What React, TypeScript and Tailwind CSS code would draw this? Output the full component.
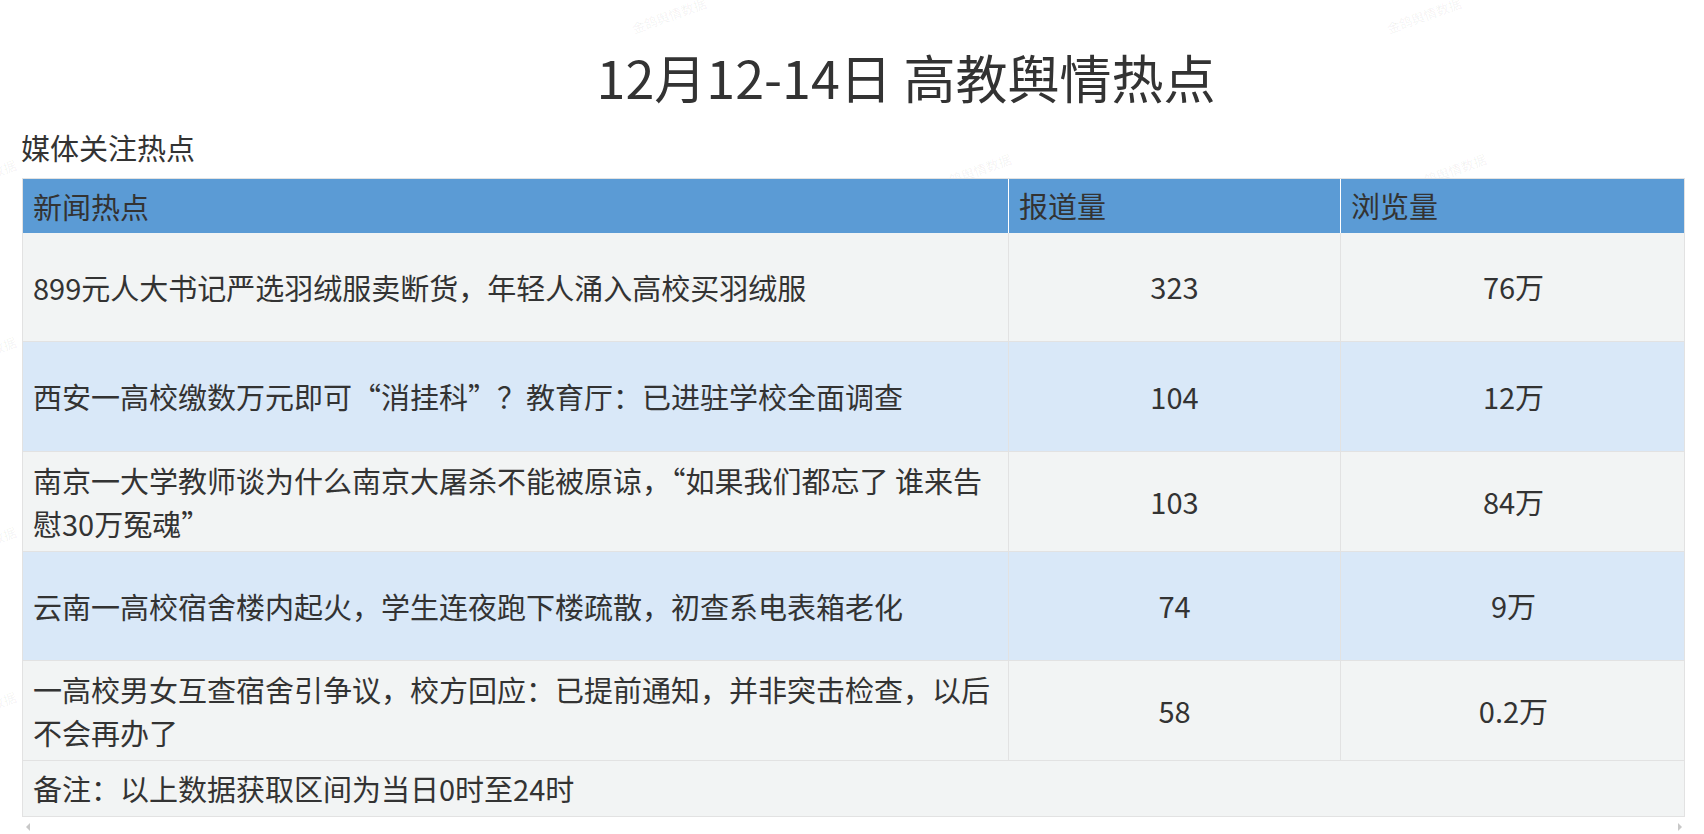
import React from "react";

const rows = [
  { title: "899元人大书记严选羽绒服卖断货，年轻人涌入高校买羽绒服", a: "323", b: "76万", bg: "bg-[#f2f4f4]", h: "h-[109px]" },
  { title: "西安一高校缴数万元即可“消挂科”？教育厅：已进驻学校全面调查", a: "104", b: "12万", bg: "bg-[#d9e8f8]", h: "h-[110px]" },
  { title: "南京一大学教师谈为什么南京大屠杀不能被原谅，“如果我们都忘了 谁来告慰30万冤魂”", a: "103", b: "84万", bg: "bg-[#f2f4f4]", h: "h-[100px]" },
  { title: "云南一高校宿舍楼内起火，学生连夜跑下楼疏散，初查系电表箱老化", a: "74", b: "9万", bg: "bg-[#d9e8f8]", h: "h-[109px]" },
  { title: "一高校男女互查宿舍引争议，校方回应：已提前通知，并非突击检查，以后不会再办了", a: "58", b: "0.2万", bg: "bg-[#f2f4f4]", h: "h-[100px]" },
];

const marks = [
  { x: 630, y: 6 },
  { x: 1385, y: 6 },
  { x: -60, y: 168 },
  { x: 935, y: 162 },
  { x: 1410, y: 162 },
  { x: -60, y: 345 },
  { x: -60, y: 535 },
  { x: -60, y: 700 },
];

export default function App() {
  return (
    <div
      className="relative w-[1704px] h-[834px] overflow-hidden bg-white text-[#333]"
      style={{ fontFamily: '"Noto Sans CJK SC", "Noto Sans", sans-serif' }}
    >
      {marks.map((m, i) => (
        <div
          key={i}
          className="absolute text-[13px] text-[#000]/[0.06] -rotate-[20deg] whitespace-nowrap pointer-events-none"
          style={{ left: m.x, top: m.y }}
        >
          金鸽舆情数据
        </div>
      ))}
      <div className="relative">
        <div className="flex justify-center pl-[108px] pt-[46px]">
          <h1 className="text-[52px] leading-[62px] font-normal">12月12-14日 高教舆情热点</h1>
        </div>
        <div className="pl-[21px] mt-[19px] text-[29px] leading-[40px]">媒体关注热点</div>
        <div className="ml-[22px] mt-[11px] w-[1663px] text-[29px]">
          <div className="grid grid-cols-[985px_332px_346px] h-[55px] bg-[#5b9bd5] border border-b-0 border-[#e2e2e2]">
            <div className="flex items-center pl-[10px] leading-[40px]">新闻热点</div>
            <div className="flex items-center pl-[10px] border-l border-white">报道量</div>
            <div className="flex items-center pl-[10px] border-l border-white">浏览量</div>
          </div>
          {rows.map((r, i) => (
            <div
              key={i}
              className={`grid grid-cols-[985px_332px_346px] border-x border-b border-[#e2e2e2] ${r.bg} ${r.h}`}
            >
              <div className="flex items-center pl-[10px] pr-[10px] leading-[43px]">{r.title}</div>
              <div className="flex items-center justify-center border-l border-[#e2e2e2]">{r.a}</div>
              <div className="flex items-center justify-center border-l border-[#e2e2e2]">{r.b}</div>
            </div>
          ))}
          <div className="flex items-center h-[56px] pl-[10px] bg-[#f2f4f4] border-x border-b border-[#e2e2e2]">
            备注：以上数据获取区间为当日0时至24时
          </div>
        </div>
        <div className="flex justify-between items-center ml-[26px] w-[1656px] mt-[5px] h-[10px]">
          <div className="w-0 h-0 border-y-[4px] border-y-transparent border-r-[4px] border-r-[#c8c8c8]" />
          <div className="w-0 h-0 border-y-[4px] border-y-transparent border-l-[4px] border-l-[#c8c8c8]" />
        </div>
      </div>
    </div>
  );
}
